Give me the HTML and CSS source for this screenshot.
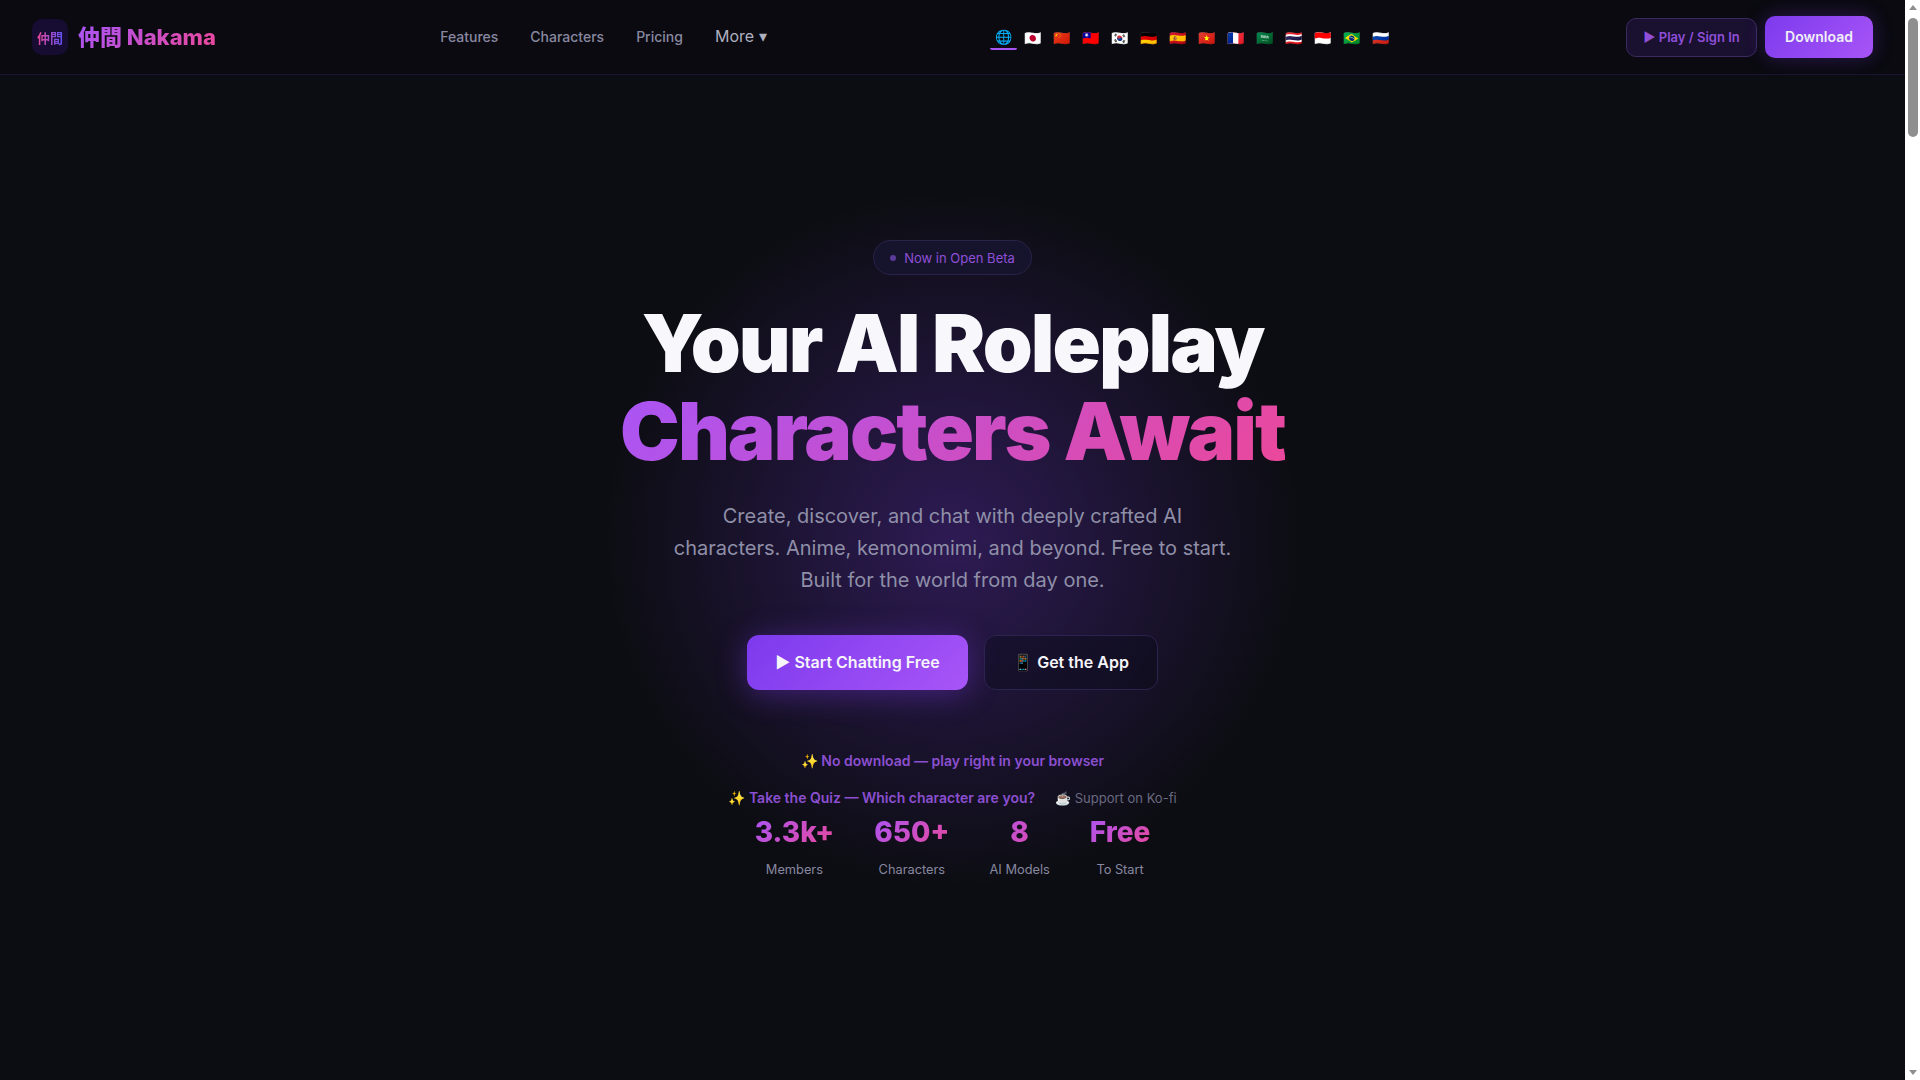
FILE: index.html
```html
<!DOCTYPE html>
<html lang="en">
<head>
    <meta charset="UTF-8">
    <title>Nakama</title>
    <link rel="stylesheet" href="styles.css">
</head>
<body>
    <main class="page">
        <nav class="nav">
            <a class="logo">
                <span class="logo-mark"><span class="logo-mark-text">仲間</span></span>
                <span class="logo-text">仲間 Nakama</span>
            </a>
            <div class="nav-links">
                <a>Features</a>
                <a>Characters</a>
                <a>Pricing</a>
                <a class="more">More ▾</a>
            </div>
            <div class="langs">
                <span class="lang active">🌐</span>
                <span class="lang">🇯🇵</span>
                <span class="lang">🇨🇳</span>
                <span class="lang">🇹🇼</span>
                <span class="lang">🇰🇷</span>
                <span class="lang">🇩🇪</span>
                <span class="lang">🇪🇸</span>
                <span class="lang">🇻🇳</span>
                <span class="lang">🇫🇷</span>
                <span class="lang">🇸🇦</span>
                <span class="lang">🇹🇭</span>
                <span class="lang">🇮🇩</span>
                <span class="lang">🇧🇷</span>
                <span class="lang">🇷🇺</span>
            </div>
            <div class="nav-actions">
                <a class="btn-play">▶ Play / Sign In</a>
                <a class="btn-download">Download</a>
            </div>
        </nav>
        <section class="hero">
            <div class="badge"><span class="badge-dot"></span>Now in Open Beta</div>
            <h1>Your AI Roleplay<br><span class="grad">Characters Await</span></h1>
            <p class="sub">Create, discover, and chat with deeply crafted AI characters. Anime, kemonomimi, and beyond. Free to start. Built for the world from day one.</p>
            <div class="cta">
                <a class="btn-main">▶ Start Chatting Free</a>
                <a class="btn-ghost">📱 Get the App</a>
            </div>
            <p class="note">✨ No download — play right in your browser</p>
            <div class="links">
                <a class="quiz">✨ Take the Quiz — Which character are you?</a>
                <a class="kofi">☕ Support on Ko-fi</a>
            </div>
            <div class="stats">
                <div class="stat"><div class="stat-num grad">3.3k+</div><div class="stat-label">Members</div></div>
                <div class="stat"><div class="stat-num grad">650+</div><div class="stat-label">Characters</div></div>
                <div class="stat"><div class="stat-num grad">8</div><div class="stat-label">AI Models</div></div>
                <div class="stat"><div class="stat-num grad">Free</div><div class="stat-label">To Start</div></div>
            </div>
        </section>
    </main>
    <div class="scrollbar">
        <span class="arrow-up"></span>
        <div class="track"><div class="thumb"></div></div>
        <span class="arrow-down"></span>
    </div>
</body>
</html>
```

FILE: styles.css
```css
* { box-sizing: border-box; margin: 0; padding: 0; }
body { height: 1080px; overflow: hidden; display: flex; font-family: Inter, "Noto Sans CJK JP", sans-serif; background: #0c0d12; color: #f0f0f5; }
.page { flex: 1; min-width: 0; }

.scrollbar { width: 15px; background: #fff; display: flex; flex-direction: column; align-items: center; padding: 5px 0; }
.track { flex: 1; width: 100%; padding: 8px 2px 0 3px; }
.thumb { height: 119px; border-radius: 5px; background: #8f8f8f; }
.arrow-up { border: 4px solid transparent; border-top: 0; border-bottom: 5px solid #8f8f8f; }
.arrow-down { border: 4px solid transparent; border-bottom: 0; border-top: 5px solid #8f8f8f; }

.nav { height: 75px; padding: 0 32px; display: flex; align-items: center; justify-content: space-between; background: #0a0a10; border-bottom: 1px solid #1a1530; }
.logo { display: flex; align-items: center; gap: 10px; }
.logo-mark { width: 36px; height: 36px; border-radius: 10px; background: #170d33; display: flex; align-items: center; justify-content: center; }
.logo-mark-text { font-size: 13px; font-weight: 700; background: linear-gradient(90deg, #ec4899, #5b50f0); -webkit-background-clip: text; background-clip: text; color: transparent; }
.logo-text { font-size: 22px; line-height: 26px; font-weight: 800; background: linear-gradient(135deg, #a855f7, #ec4899); -webkit-background-clip: text; background-clip: text; color: transparent; }

.nav-links { display: flex; align-items: center; gap: 32px; padding-bottom: 2px; font-size: 14px; font-weight: 500; color: #8888a0; }
.nav-links .more { font-size: 16px; font-weight: 400; color: #b0b0c0; }

.langs { display: flex; gap: 4px; padding-right: 9px; }
.lang { width: 25px; height: 25px; font-size: 14px; display: flex; align-items: center; justify-content: center; }
.lang.active { border-bottom: 2px solid #a855f7; border-radius: 2px; width: 27px; margin: 0 -1px; }

.nav-actions { display: flex; align-items: center; gap: 8px; }
.btn-play { width: 131px; height: 39px; border: 1px solid #3a2a60; border-radius: 10px; background: #1a1030; color: #8f4fd8; font-size: 13px; font-weight: 600; display: flex; align-items: center; justify-content: center; }
.btn-download { width: 108px; height: 42px; padding-bottom: 1px; border-radius: 10px; background: linear-gradient(135deg, #7c3aed, #a855f7); box-shadow: 0 0 20px rgba(124, 58, 237, 0.3); color: #f0f0f5; font-size: 14px; font-weight: 600; display: flex; align-items: center; justify-content: center; }

.hero { height: 1005px; padding-top: 165px; display: flex; flex-direction: column; align-items: center; text-align: center; background: radial-gradient(circle 350px at 50% 465px, rgba(124, 58, 237, 0.3), rgba(124, 58, 237, 0)); }
.badge { height: 35px; padding: 0 16px; display: flex; align-items: center; gap: 8px; border: 1px solid #2a2248; border-radius: 18px; background: #16142c; color: #8f4fd8; font-size: 13px; font-weight: 400; }
.badge-dot { width: 6px; height: 6px; border-radius: 50%; background: #5b3a9a; }
h1 { margin-top: 24px; font-size: 80px; line-height: 88px; font-weight: 900; letter-spacing: -2px; color: #f7f7fc; }
.grad { background: linear-gradient(135deg, #a855f7, #ec4899); -webkit-background-clip: text; background-clip: text; color: transparent; }
.sub { margin-top: 25px; width: 560px; font-size: 20px; line-height: 32px; color: #8f8fa8; }
.cta { margin-top: 39px; display: flex; gap: 16px; }
.btn-main { width: 221px; height: 55px; padding-bottom: 1px; border-radius: 12px; background: linear-gradient(135deg, #7c3aed, #a855f7); box-shadow: 0 4px 30px rgba(124, 58, 237, 0.4); color: #f5f5fa; font-size: 16px; font-weight: 600; display: flex; align-items: center; justify-content: center; }
.btn-ghost { width: 174px; height: 55px; padding-bottom: 1px; border: 1px solid #2c2450; border-radius: 12px; background: rgba(12, 10, 26, 0.45); color: #f5f5fa; font-size: 16px; font-weight: 600; display: flex; align-items: center; justify-content: center; }
.note { margin-top: 62px; font-size: 14px; font-weight: 600; color: #8b4fd0; }
.links { margin-top: 20px; display: flex; align-items: center; gap: 20px; }
.quiz { font-size: 14px; font-weight: 600; color: #8b4fd0; }
.kofi { font-size: 13px; color: #6a6a80; }
.stats { margin-top: 4px; display: flex; gap: 40px; }
.stat-num { font-size: 28px; line-height: 44px; font-weight: 800; }
.stat-label { margin-top: 6px; font-size: 12.8px; line-height: 20px; color: #8888a0; }
```
